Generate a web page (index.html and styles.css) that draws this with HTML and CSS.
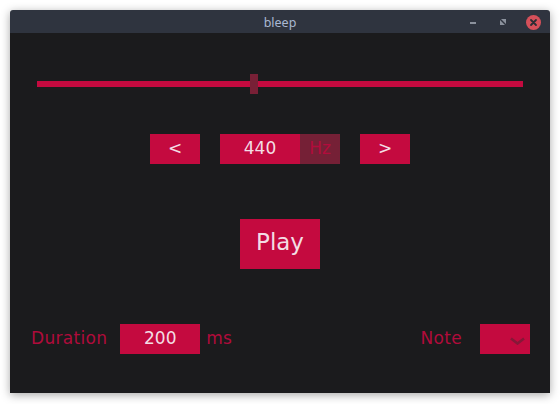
FILE: index.html
```html
<!DOCTYPE html>
<html>
<head>
<meta charset="utf-8">
<link rel="stylesheet" href="styles.css">
</head>
<body>
<div class="window">
  <div class="titlebar">
    <span class="title">bleep</span>
    <div class="controls">
      <span class="ctl-min"></span>
      <svg class="ctl-max" width="6" height="6" viewBox="0 0 6 6"><path d="M1 0H6V5Z M0 1V6H5Z" fill="#8b919c"/></svg>
      <svg class="ctl-close" width="15" height="15" viewBox="0 0 15 15"><circle cx="7.5" cy="7.5" r="7.5" fill="#d5505a"/><path d="M5 5L10 10M10 5L5 10" stroke="#2a2d34" stroke-width="1.8" stroke-linecap="round"/></svg>
    </div>
  </div>
  <div class="content">
    <div class="slider">
      <div class="track"></div>
      <div class="thumb"></div>
    </div>
    <div class="freq-row">
      <div class="btn small">&lt;</div>
      <div class="freq">
        <div class="field">440</div>
        <div class="unit">Hz</div>
      </div>
      <div class="btn small">&gt;</div>
    </div>
    <div class="play-row">
      <div class="btn play">Play</div>
    </div>
    <div class="bottom-row">
      <div class="group">
        <span class="label">Duration</span>
        <div class="field dur">200</div>
        <span class="label ms">ms</span>
      </div>
      <div class="group">
        <span class="label">Note</span>
        <div class="select">
          <svg width="15" height="8" viewBox="0 0 15 8"><path d="M1 1.5L7.5 6.5L14 1.5" fill="none" stroke="#861838" stroke-width="2.6"/></svg>
        </div>
      </div>
    </div>
  </div>
</div>
</body>
</html>
```

FILE: styles.css
```css
html, body {
  margin: 0;
  padding: 0;
  background: #ffffff;
}
body {
  width: 560px;
  height: 404px;
  overflow: hidden;
  font-family: "DejaVu Sans", sans-serif;
}
.window {
  margin: 10px 0 0 10px;
  width: 540px;
  height: 383px;
  display: flex;
  flex-direction: column;
  box-shadow: 0 2px 10px rgba(0,0,0,0.35);
  border-radius: 3px 3px 0 0;
  overflow: hidden;
}
.titlebar {
  height: 23px;
  background: #2f343f;
  position: relative;
  display: flex;
  align-items: center;
  justify-content: center;
  flex-shrink: 0;
}
.title {
  font-family: "Noto Sans", sans-serif;
  font-size: 12.5px;
  color: #a9b8d2;
  margin-top: 1px;
}
.controls {
  position: absolute;
  right: 9px;
  top: 5px;
  display: flex;
  align-items: center;
  height: 15px;
}
.ctl-min {
  width: 6px;
  height: 2px;
  background: #8b919c;
  margin-right: 24px;
}
.ctl-max {
  margin-right: 20px;
  margin-top: -2px;
}
.ctl-close {
  display: block;
}
.content {
  flex: 1;
  background: #1b1b1d;
  display: flex;
  flex-direction: column;
  padding: 41px 0 0 0;
}
.slider {
  position: relative;
  height: 20px;
  margin: 0 27px;
  display: flex;
  align-items: center;
}
.track {
  height: 6px;
  width: 100%;
  background: #c40a3f;
}
.thumb {
  position: absolute;
  left: 213px;
  top: 0;
  width: 8px;
  height: 20px;
  background: #782036;
}
.freq-row {
  margin-top: 40px;
  display: flex;
  justify-content: center;
  gap: 20px;
  height: 30px;
}
.btn {
  background: #c40a3f;
  color: #f3dde4;
  display: flex;
  align-items: center;
  justify-content: center;
  box-sizing: border-box;
}
.btn.small {
  width: 50px;
  height: 30px;
  font-size: 17px;
  padding-bottom: 2px;
}
.freq {
  display: flex;
}
.field {
  width: 80px;
  height: 30px;
  background: #c40a3f;
  color: #f3dde4;
  font-size: 17px;
  display: flex;
  align-items: center;
  justify-content: center;
  box-sizing: border-box;
  padding-bottom: 3px;
}
.unit {
  width: 40px;
  height: 30px;
  background: #752036;
  color: #b20c3c;
  font-size: 17px;
  display: flex;
  align-items: center;
  justify-content: center;
  box-sizing: border-box;
  padding-bottom: 3px;
}
.play-row {
  margin-top: 55px;
  display: flex;
  justify-content: center;
}
.btn.play {
  width: 80px;
  height: 50px;
  font-size: 23px;
  padding-bottom: 5px;
}
.bottom-row {
  margin-top: 55px;
  display: flex;
  justify-content: space-between;
  align-items: center;
  padding: 0 20px 0 20px;
  height: 30px;
}
.group {
  display: flex;
  align-items: center;
}
.label {
  color: #b00b3b;
  font-size: 17px;
  letter-spacing: 0.3px;
  margin-right: 13px;
  margin-top: -3px;
}
.label.ms {
  margin-left: 6px;
  margin-right: 0;
}
.group .label:first-child {
  margin-left: 1px;
}
.select {
  width: 50px;
  height: 30px;
  margin-left: 5px;
  background: #c40a3f;
  display: flex;
  align-items: center;
  justify-content: flex-end;
  padding-right: 5px;
  box-sizing: border-box;
}
.select svg {
  margin-top: 3px;
}
```
